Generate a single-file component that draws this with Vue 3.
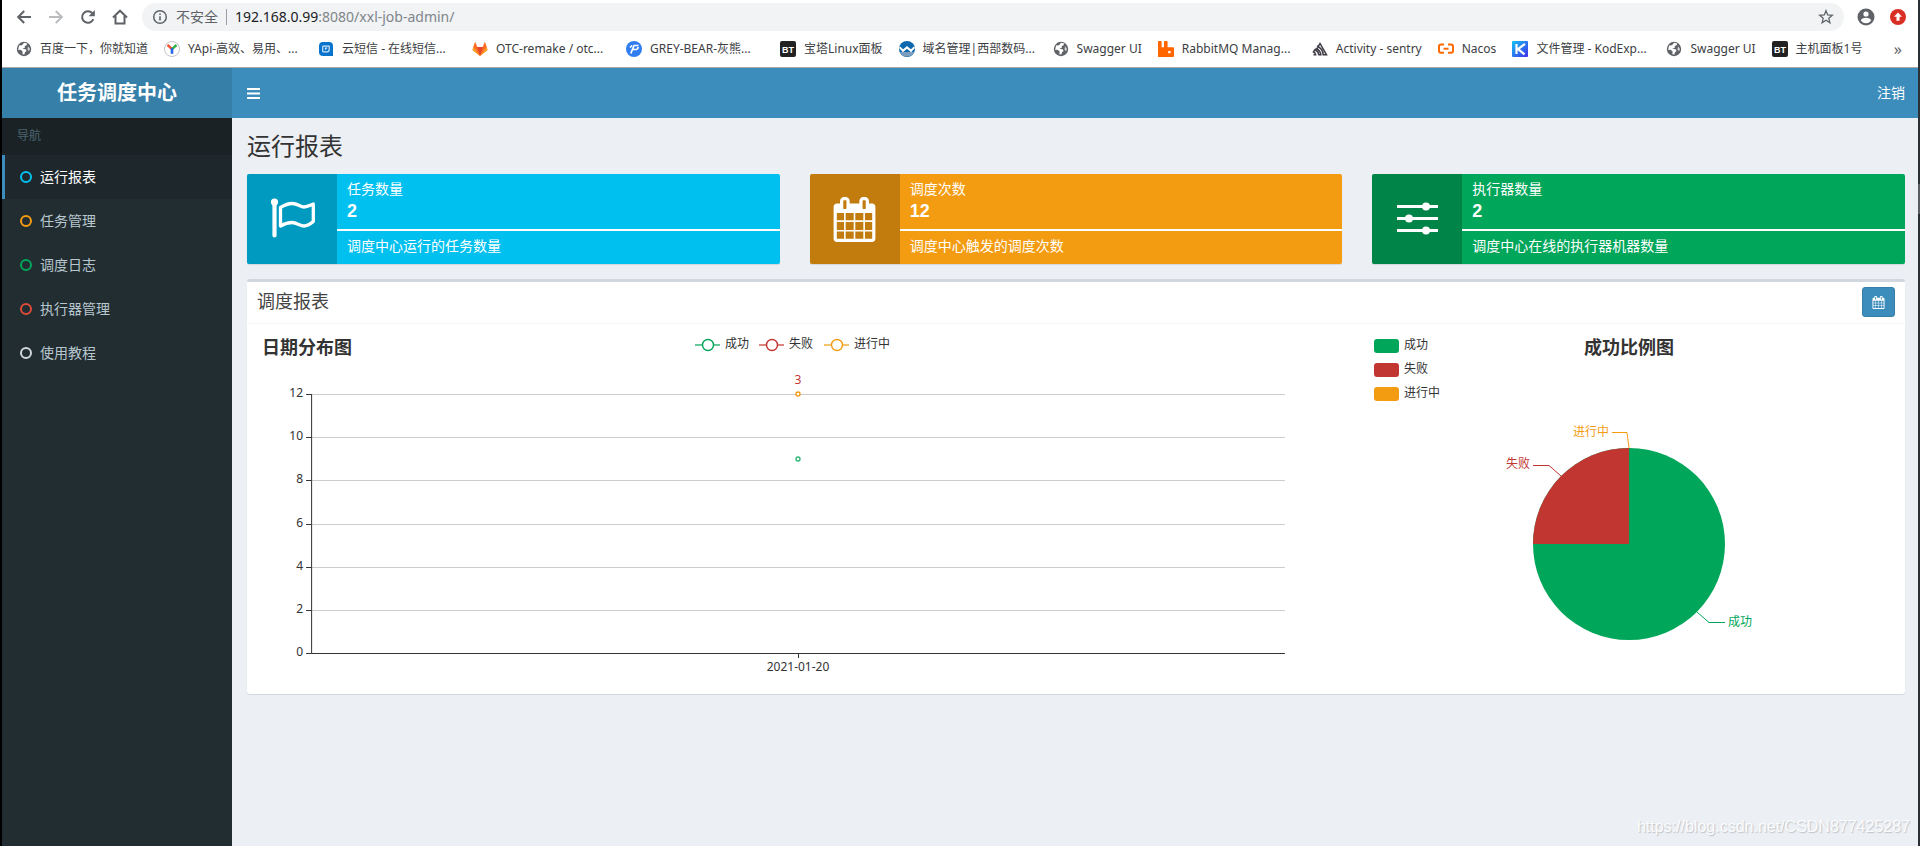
<script setup>
const bookmarks = [
  { icon: 'globe', label: '百度一下，你就知道' },
  { icon: 'yapi', label: 'YApi-高效、易用、...', full: true },
  { icon: 'cloud', label: '云短信 - 在线短信...', full: true },
  { icon: 'fox', label: 'OTC-remake / otc...', full: true },
  { icon: 'bear', label: 'GREY-BEAR-灰熊...', full: true },
  { icon: 'bt', label: '宝塔Linux面板' },
  { icon: 'west', label: '域名管理|西部数码...', full: true },
  { icon: 'globe', label: 'Swagger UI' },
  { icon: 'rabbit', label: 'RabbitMQ Manag...', full: true },
  { icon: 'sentry', label: 'Activity - sentry' },
  { icon: 'nacos', label: 'Nacos' },
  { icon: 'kod', label: '文件管理 - KodExp...', full: true },
  { icon: 'globe', label: 'Swagger UI' },
  { icon: 'bt', label: '主机面板1号' },
]

const menu = [
  { label: '运行报表', tone: 'aqua', active: true },
  { label: '任务管理', tone: 'yellow' },
  { label: '调度日志', tone: 'green' },
  { label: '执行器管理', tone: 'red' },
  { label: '使用教程', tone: 'gray' },
]

const stats = [
  { icon: 'flag', tone: 'aqua', title: '任务数量', value: 2, note: '调度中心运行的任务数量' },
  { icon: 'calendar', tone: 'yellow', title: '调度次数', value: 12, note: '调度中心触发的调度次数' },
  { icon: 'sliders', tone: 'green', title: '执行器数量', value: 2, note: '调度中心在线的执行器机器数量' },
]

const plotTop = 60
const plotBottom = 319
const ticks = [12, 10, 8, 6, 4, 2, 0].map((value) => ({
  value,
  y: Math.round(plotBottom - (value / 12) * (plotBottom - plotTop)),
}))

const lineLegend = [
  { label: '成功', color: '#00A65A', x: -103 },
  { label: '失败', color: '#c23632', x: -39 },
  { label: '进行中', color: '#F39C12', x: 26 },
]

const pieLegend = [
  { label: '成功', color: '#00A65A', y: 5 },
  { label: '失败', color: '#c23632', y: 29 },
  { label: '进行中', color: '#F39C12', y: 53 },
]

const calendarPath =
  'M192 1664h288v-288h-288v288zm352 0h320v-288h-320v288zm-352-352h288v-320h-288v320zm352 0h320v-320h-320v320zm-352-384h288v-288h-288v288zm736 736h320v-288h-320v288zm-384-736h320v-288h-320v288zm768 736h288v-288h-288v288zm-384-352h320v-320h-320v320zm-352-864v-288q0-13-9.5-22.5t-22.5-9.5h-64q-13 0-22.5 9.5t-9.5 22.5v288q0 13 9.5 22.5t22.5 9.5h64q13 0 22.5-9.5t9.5-22.5zm736 864h288v-320h-288v320zm-384-384h320v-288h-320v288zm384 0h288v-288h-288v288zm32-480v-288q0-13-9.5-22.5t-22.5-9.5h-64q-13 0-22.5 9.5t-9.5 22.5v288q0 13 9.5 22.5t22.5 9.5h64q13 0 22.5-9.5t9.5-22.5zm384-64v1280q0 52-38 90t-90 38h-1408q-52 0-90-38t-38-90v-1280q0-52 38-90t90-38h128v-96q0-66 47-113t113-47h64q66 0 113 47t47 113v96h384v-96q0-66 47-113t113-47h64q66 0 113 47t47 113v96h128q52 0 90 38t38 90z'
</script>

<template>
  <div class="window">
    <div class="chrome">
      <div class="toolbar">
        <div class="nav-buttons">
          <button type="button" class="tool" aria-label="后退">
            <svg width="16" height="16" viewBox="0 0 16 16"><path d="M15 8H2.5M8.2 2L2.2 8l6 6" fill="none" stroke="#5f6368" stroke-width="2" /></svg>
          </button>
          <button type="button" class="tool" aria-label="前进">
            <svg width="16" height="16" viewBox="0 0 16 16"><path d="M1 8h12.5M7.800 2l6 6-6 6" fill="none" stroke="#babcbe" stroke-width="2" /></svg>
          </button>
          <button type="button" class="tool" aria-label="重新加载">
            <svg width="16" height="16" viewBox="0 0 16 16"><path d="M13.300 10.200a5.800 5.800 0 1 1-1-6" fill="none" stroke="#5f6368" stroke-width="2" /><path d="M14.800 1v6.200H8.600z" fill="#5f6368" /></svg>
          </button>
          <button type="button" class="tool" aria-label="主页">
            <svg width="16" height="16" viewBox="0 0 16 16"><path d="M1 8.500L8 1.700l7 6.800M3.500 7v7.500h9V7" fill="none" stroke="#5f6368" stroke-width="2" /></svg>
          </button>
        </div>
        <div class="omnibox">
          <svg width="16" height="16" viewBox="0 0 16 16"><circle cx="8" cy="8" r="6.300" fill="none" stroke="#5f6368" stroke-width="1.500" /><path d="M8 7.200v4.200M8 4.500v1.600" stroke="#5f6368" stroke-width="1.600" /></svg>
          <span class="insecure">不安全</span>
          <span class="address"><span class="host">192.168.0.99</span>:8080/xxl-job-admin/</span>
          <button type="button" class="tool" aria-label="收藏">
            <svg width="16" height="16" viewBox="0 0 16 16"><path d="M8 1.700l1.700 4.300 4.600.3-3.500 3 1.100 4.500L8 11.300l-3.900 2.500 1.100-4.500-3.500-3 4.600-.3z" fill="none" stroke="#5f6368" stroke-width="1.300" /></svg>
          </button>
        </div>
        <div class="profile">
          <button type="button" class="tool" aria-label="用户">
            <svg width="18" height="18" viewBox="0 0 18 18"><circle cx="9" cy="9" r="8.500" fill="#5f6368" /><circle cx="9" cy="6" r="2.600" fill="#fff" /><path d="M3.800 12.200c1-1.700 3.300-2.400 5.200-2.400s4.200.7 5.200 2.400a6 6 0 0 1-10.400 0z" fill="#fff" /></svg>
          </button>
          <button type="button" class="tool" aria-label="更新">
            <svg width="16" height="16" viewBox="0 0 16 16"><circle cx="8" cy="8" r="8" fill="#d93025" /><path d="M8 3.500l4 4.300H9.500v4h-3v-4H4z" fill="#fff" /></svg>
          </button>
        </div>
      </div>

      <nav class="bookmarks" aria-label="书签">
        <a v-for="(b, i) in bookmarks" :key="i" href="#" class="bookmark">
          <svg width="16" height="16" viewBox="0 0 16 16">
            <g v-if="b.icon === 'globe'">
              <circle cx="8" cy="8" r="7.200" fill="#5f6368" />
              <path d="M3 4.500l3-.2 2-2.600 3.300.8-1 2-1.600.6.200 1.700-2.700.9 3.400.5 1 1.700-1.600 1.400-.6 2.300-2-.3.200-2.900-2-1.700-2.400.2z" fill="#fff" />
              <path d="M12 5.200l2 2.800-1 2.300-1.500-1.800z" fill="#fff" opacity=".75" />
            </g>
            <g v-else-if="b.icon === 'yapi'">
              <circle cx="8" cy="8" r="7.500" fill="#fff" stroke="#c4c4c4" />
              <path d="M3.500 3.800l4.500 4.400" stroke="#f44f2a" stroke-width="2.400" />
              <path d="M12.500 4L8 8.200" stroke="#34b24a" stroke-width="2.400" />
              <path d="M8 7.200v5.600" stroke="#2463eb" stroke-width="2.600" />
            </g>
            <g v-else-if="b.icon === 'cloud'">
              <path d="M5 1h6q4 0 4 4v10H5q-4 0-4-4V5q0-4 4-4z" fill="#0a74cc" />
              <path d="M5.500 5.200h5.700v3.600q0 2-2 2H5.500q-.8 0-.8-.8V6q0-.8.800-.8zM7.500 8.700V7.200h1.700" fill="none" stroke="#cfe6f8" stroke-width="1.200" />
            </g>
            <g v-else-if="b.icon === 'fox'">
              <path d="M8 15L.5 9l1-4L3.200.8 5.300 6h5.400L12.800.8 14.500 5l1 4z" fill="#fc6d26" />
              <path d="M8 15L5.300 6h5.400z" fill="#e24329" />
              <path d="M8 15L.5 9l1-3z M8 15l7.500-6-1-3z" fill="#fca326" />
            </g>
            <g v-else-if="b.icon === 'bear'">
              <circle cx="8" cy="8" r="8" fill="#2f7df1" />
              <path d="M4.800 12.500L8 4.500h4.500M6.500 8.500h4q1.500-.5 1.800-2.500M4 6.500l2-2" fill="none" stroke="#fff" stroke-width="1.700" />
            </g>
            <g v-else-if="b.icon === 'bt'">
              <rect width="16" height="16" rx="2" fill="#222" />
              <text x="8" y="12" class="bt-mark">BT</text>
            </g>
            <g v-else-if="b.icon === 'west'">
              <circle cx="8" cy="8" r="8" fill="#0b68ae" />
              <path d="M.8 11h14.400A8 8 0 0 1 .8 11z" fill="#7e9dbd" />
              <path d="M.5 6.200l3.500 3.600L8 6.400l4 3.400 3.500-3.600" fill="none" stroke="#fff" stroke-width="2" />
            </g>
            <path v-else-if="b.icon === 'rabbit'" d="M0 16V.8Q0 0 .8 0h2q.8 0 .8.800v5.400h2.400V.8Q6 0 6.800 0h2q.8 0 .8.800v5.400h5.600q.8 0 .8.800v8.200q0 .8-.8.800zM10.200 10v2.300h2.400V10z" fill="#ff6600" fill-rule="evenodd" />
            <path v-else-if="b.icon === 'sentry'" d="M3.600 7.200c3 1.300 5 3.600 5.300 6.600h-2c-.3-2.300-1.700-4-4-5L1.500 11c1.300.5 2 1.400 2.200 2.800H1.500M5 5c3.800 1.700 6 4.900 6.200 8.800h3.300L8 2.500 5.300 7.300" fill="none" stroke="#413b45" stroke-width="1.500" />
            <path v-else-if="b.icon === 'nacos'" d="M6 3.500H3Q1 3.500 1 5.500v4.200q0 2 2 2h3M10 3.500h3q2 0 2 2v4.200q0 2-2 2h-3M5.500 7.700h5" fill="none" stroke="#ff6a00" stroke-width="2" />
            <g v-else-if="b.icon === 'kod'">
              <defs><linearGradient id="kod-fill" x1="0" y1="0" x2="1" y2="1"><stop offset="0" stop-color="#11c3f4" /><stop offset="1" stop-color="#4330e8" /></linearGradient></defs>
              <rect width="16" height="16" rx="1" fill="url(#kod-fill)" />
              <path d="M4.500 3v10M13 2.800L6 8l6.500 5.300" fill="none" stroke="#fff" stroke-width="2.200" />
            </g>
          </svg>
          <span class="bookmark-label" :class="{ full: b.full }">{{ b.label }}</span>
        </a>
        <button type="button" class="more" aria-label="更多书签">»</button>
      </nav>
    </div>

    <header class="topbar">
      <a href="#" class="brand">任务调度中心</a>
      <div class="topbar-main">
        <button type="button" class="toggle" aria-label="切换导航">
          <svg width="13" height="11" viewBox="0 0 13 11"><path d="M0 1h13M0 5.500h13M0 10h13" stroke="#fff" stroke-width="2" /></svg>
        </button>
        <a href="#" class="logout">注销</a>
      </div>
    </header>

    <div class="layout">
      <aside class="sidebar">
        <div class="menu-head">导航</div>
        <ul class="menu">
          <li v-for="m in menu" :key="m.label">
            <a href="#" class="menu-link" :class="{ active: m.active }">
              <span class="ring" :class="m.tone"></span>{{ m.label }}
            </a>
          </li>
        </ul>
      </aside>

      <main class="content">
        <h1>运行报表</h1>

        <section class="stats">
          <article v-for="s in stats" :key="s.title" class="stat" :class="s.tone">
            <div class="stat-icon">
              <svg v-if="s.icon === 'flag'" width="48" height="48" viewBox="0 0 48 48">
                <path d="M6.500 7v33.500" stroke="#fff" stroke-width="4.200" stroke-linecap="round" />
                <circle cx="6.500" cy="7" r="3.600" fill="#fff" />
                <path d="M12.500 12.500Q19 8.500 24 8.500C30 8.500 32 12 36 12 40 12 42.500 10 45.300 9V26.500Q40 31 36 31C32 31 29 27.500 24 27.500 19 27.500 16 29 12.500 31z" fill="none" stroke="#fff" stroke-width="3.300" stroke-linejoin="round" />
              </svg>
              <svg v-else-if="s.icon === 'calendar'" width="45" height="45" viewBox="0 0 1792 1792"><path :d="calendarPath" fill="#fff" /></svg>
              <svg v-else width="41" height="36" viewBox="0 0 41 36">
                <path d="M0 5.500h41M0 17.500h41M0 29.500h41" stroke="#fff" stroke-width="3" />
                <circle cx="29" cy="5.500" r="4" fill="#fff" />
                <circle cx="12" cy="17.500" r="4" fill="#fff" />
                <circle cx="29" cy="29.500" r="4" fill="#fff" />
              </svg>
            </div>
            <div class="stat-body">
              <div class="stat-line">{{ s.title }}</div>
              <div class="stat-value">{{ s.value }}</div>
              <div class="stat-rule"></div>
              <div class="stat-line">{{ s.note }}</div>
            </div>
          </article>
        </section>

        <section class="panel">
          <div class="panel-head">
            <h2>调度报表</h2>
            <button type="button" class="range" aria-label="选择日期">
              <svg width="13" height="13" viewBox="0 0 1792 1792"><path :d="calendarPath" fill="#fff" /></svg>
            </button>
          </div>
          <div class="charts">
            <div class="line">
              <svg class="plot" width="100%" height="350">
                <text x="5" y="20" class="chart-title">日期分布图</text>
                <svg x="50%" y="0" overflow="visible">
                  <g v-for="l in lineLegend" :key="l.label">
                    <path :d="`M${l.x} 11h25`" :stroke="l.color" stroke-width="2" opacity=".6" />
                    <circle :cx="l.x + 13" cy="11" r="5.500" fill="#fff" :stroke="l.color" stroke-width="1.400" />
                    <text :x="l.x + 30" y="14" class="chart-text">{{ l.label }}</text>
                  </g>
                </svg>
                <g v-for="t in ticks" :key="t.value">
                  <rect v-if="t.value" x="5%" :y="t.y" width="90%" height="1" fill="#ccc" />
                  <svg x="5%" :y="t.y" overflow="visible">
                    <rect x="-5" y="0" width="5" height="1" fill="#333" />
                    <text x="-8" y="3" class="chart-text end">{{ t.value }}</text>
                  </svg>
                </g>
                <rect x="5%" :y="plotTop" width="1" :height="plotBottom - plotTop" fill="#333" />
                <rect x="5%" :y="plotBottom" width="90%" height="1" fill="#333" />
                <svg x="50%" y="0" overflow="visible">
                  <rect x="0" :y="plotBottom" width="1" height="5" fill="#333" />
                  <text x="0" y="337" class="chart-text middle">2021-01-20</text>
                  <text x="0" y="50" class="chart-text middle fail">3</text>
                  <circle cx="0" cy="60" r="2" fill="#fff" stroke="#F39C12" stroke-width="1.400" />
                  <circle cx="0" cy="125" r="2" fill="#fff" stroke="#2db878" stroke-width="1.400" />
                </svg>
              </svg>
            </div>
            <div class="pie">
              <svg class="plot" width="100%" height="350">
                <g v-for="l in pieLegend" :key="l.label">
                  <rect x="5" :y="l.y" width="25" height="14" rx="3" :fill="l.color" />
                  <text x="35" :y="l.y + 10" class="chart-text">{{ l.label }}</text>
                </g>
                <svg x="50%" y="0" overflow="visible">
                  <text x="0" y="20" class="chart-title middle">成功比例图</text>
                  <circle cx="0" cy="210" r="96" fill="#00A65A" />
                  <path d="M0 210H-96A96 96 0 0 1 0 114z" fill="#c23632" />
                  <path d="M-17 98.500H-2L0 114" fill="none" stroke="#F39C12" />
                  <path d="M-96 131.500H-80L-68 142" fill="none" stroke="#c23632" />
                  <path d="M68 278L80 288.500H96" fill="none" stroke="#00A65A" />
                  <text x="-20" y="102" class="chart-text end running">进行中</text>
                  <text x="-99" y="134" class="chart-text end fail">失败</text>
                  <text x="99" y="292" class="chart-text success">成功</text>
                </svg>
              </svg>
            </div>
          </div>
        </section>
      </main>
    </div>

    <div class="scroll-mark"></div>
    <div class="watermark">https://blog.csdn.net/CSDN877425287</div>
  </div>
</template>

<style>
body {
  margin: 0;
}
</style>

<style scoped>
* {
  box-sizing: border-box;
}

.window {
  position: relative;
  display: flex;
  flex-direction: column;
  min-height: 100vh;
  border-left: 2px solid #000;
  border-right: 2px solid #2b3035;
  background: #ecf0f5;
  color: #333;
  font: 14px/20px "Liberation Sans", "Noto Sans CJK SC", sans-serif;
}

a {
  color: inherit;
  text-decoration: none;
}

button {
  border: 0;
  padding: 0;
  background: none;
  font: inherit;
  color: inherit;
}

svg {
  display: block;
  flex: none;
}

.chrome {
  background: #fff;
  border-bottom: 1px solid #a9a9a9;
  font-family: "Noto Sans", "Noto Sans CJK SC", sans-serif;
}

.toolbar {
  display: flex;
  align-items: center;
  padding-top: 3px;
}

.nav-buttons {
  display: flex;
  gap: 16px;
  padding: 0 14px;
}

.tool {
  display: flex;
}

.omnibox {
  display: flex;
  flex: 1;
  align-items: center;
  height: 28px;
  padding: 0 10px;
  border-radius: 14px;
  background: #f1f3f4;
  color: #80868b;
}

.insecure {
  margin: 0 8px;
  padding-right: 8px;
  border-right: 1px solid #9aa0a6;
  line-height: 16px;
  color: #5f6368;
}

.address {
  flex: 1;
}

.host {
  color: #202124;
}

.profile {
  display: flex;
  align-items: center;
  gap: 15px;
  padding: 0 12px 0 13px;
}

.bookmarks {
  display: flex;
  align-items: center;
  gap: 16px;
  height: 36px;
  padding: 0 16px 0 14px;
  font-size: 12px;
  white-space: nowrap;
}

.bookmark {
  display: flex;
  align-items: center;
  gap: 8px;
  color: #3c4043;
}

.full {
  width: 114px;
}

.bt-mark {
  font: bold 9px "Liberation Sans", sans-serif;
  fill: #fff;
  text-anchor: middle;
}

.more {
  margin-left: auto;
  font-size: 16px;
  color: #5f6368;
}

.topbar {
  display: flex;
  height: 50px;
  background: #3c8dbc;
  color: #fff;
}

.brand {
  width: 230px;
  background: #367fa9;
  font-size: 20px;
  font-weight: 700;
  line-height: 50px;
  text-align: center;
}

.topbar-main {
  display: flex;
  flex: 1;
  align-items: center;
  justify-content: space-between;
  padding: 0 13px 0 15px;
}

.layout {
  display: flex;
  flex: 1;
}

.sidebar {
  width: 230px;
  background: #222d32;
}

.menu-head {
  padding: 8px 15px 9px;
  background: #1a2226;
  color: #4b646f;
  font-size: 12px;
}

.menu {
  margin: 0;
  padding: 0;
  list-style: none;
}

.menu-link {
  display: flex;
  align-items: center;
  gap: 8px;
  height: 44px;
  padding-left: 15px;
  border-left: 3px solid transparent;
  color: #b8c7ce;
}

.menu-link.active {
  border-left-color: #3c8dbc;
  background: #1e282c;
  color: #fff;
}

.ring {
  width: 12px;
  height: 12px;
  border: 2px solid;
  border-radius: 50%;
}

.ring.aqua { color: #00c0ef; }
.ring.yellow { color: #f39c12; }
.ring.green { color: #00a65a; }
.ring.red { color: #dd4b39; }
.ring.gray { color: #d2d6de; }

.content {
  flex: 1;
  min-width: 0;
  padding: 16px 13px 15px 15px;
}

h1 {
  margin: 0 0 14px;
  font-size: 24px;
  font-weight: 400;
  line-height: 26px;
}

.stats {
  display: grid;
  grid-template-columns: repeat(3, 1fr);
  gap: 30px;
  margin-bottom: 15px;
}

.stat {
  display: flex;
  height: 90px;
  overflow: hidden;
  border-radius: 2px;
  box-shadow: 0 1px 1px rgba(0, 0, 0, 0.1);
  color: #fff;
}

.stat.aqua { background: #00c0ef; }
.stat.yellow { background: #f39c12; }
.stat.green { background: #00a65a; }

.stat-icon {
  display: flex;
  align-items: center;
  justify-content: center;
  width: 90px;
  background: rgba(0, 0, 0, 0.2);
}

.stat-body {
  flex: 1;
  padding-top: 5px;
}

.stat-line,
.stat-value {
  padding: 0 10px;
}

.stat-value {
  font-size: 18px;
  font-weight: 700;
  line-height: 25px;
}

.stat-rule {
  height: 2px;
  margin: 5px 0;
  background: #fff;
}

.panel {
  border-top: 3px solid #d2d6de;
  border-radius: 3px;
  background: #fff;
  box-shadow: 0 1px 1px rgba(0, 0, 0, 0.1);
}

.panel-head {
  display: flex;
  align-items: center;
  justify-content: space-between;
  padding: 5px 10px 6px;
  border-bottom: 1px solid #f4f4f4;
}

h2 {
  margin: 0;
  font-size: 18px;
  font-weight: 400;
  color: #444;
}

.range {
  display: flex;
  align-items: center;
  justify-content: center;
  width: 33px;
  height: 30px;
  border: 1px solid #367fa9;
  border-radius: 3px;
  background: #3c8dbc;
}

.charts {
  display: grid;
  grid-template-columns: minmax(0, 2fr) minmax(0, 1fr);
  margin: 0 -5px;
  padding: 10px 0;
}

.line {
  padding: 0 15px;
}

.pie {
  padding: 0 21px 0 15px;
}

.plot {
  overflow: visible;
}

.chart-title {
  fill: #333;
  font-size: 18px;
  font-weight: 700;
}

.chart-text {
  fill: #333;
  font: 12px "Noto Sans", "Noto Sans CJK SC", sans-serif;
}

.end { text-anchor: end; }
.middle { text-anchor: middle; }
.fail { fill: #c23632; }
.running { fill: #f39c12; }
.success { fill: #00a65a; }

.scroll-mark {
  position: absolute;
  top: 184px;
  right: -2px;
  width: 2px;
  height: 30px;
  background: #5a5e62;
}

.watermark {
  position: absolute;
  right: 8px;
  bottom: 9px;
  font-size: 16px;
  color: #fff;
  opacity: 0.8;
  text-shadow: 1px 1px 1px #b4b8be;
}
</style>
